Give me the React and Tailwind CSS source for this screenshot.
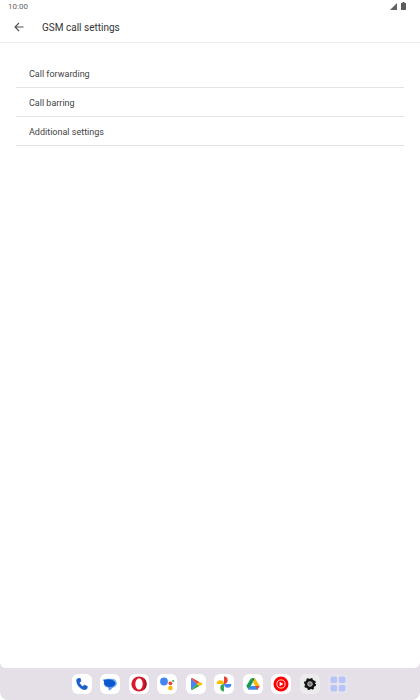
import React from "react";

const settings = ["Call forwarding", "Call barring", "Additional settings"];

const apps = [
  {
    name: "Phone",
    tile: "bg-white",
    art: (
      <path
        d="M8.200 4.500 6 4.600C5 4.800 4.600 6 4.800 7.500c.5 4 3.700 7.400 7.400 8 1.500.2 2.600-.4 2.900-1.500l.1-1.700-2.900-1.100-1.500 1.400C9 11.700 7.800 10.200 7.400 8.600L8.900 7.200Z"
        fill="#1a5dcb"
        stroke="#1a5dcb"
        strokeWidth="0.8"
        strokeLinejoin="round"
      />
    ),
  },
  {
    name: "Messages",
    tile: "bg-white",
    art: (
      <>
        <rect x="3.800" y="4.800" width="13" height="8.800" rx="4.400" fill="#7eacf8" />
        <path d="M8 13h5.500l-3.700 3.300c-.5.400-1 .1-1-.5Z" fill="#5d94ef" />
        <ellipse cx="9.800" cy="9.300" rx="5.600" ry="3.700" fill="#0b57d0" />
        <path d="M3.600 5.600h6v3.700H4.400c0-1.300-.4-2-1-2.900-.3-.5-.200-.8.2-.8Z" fill="#0b57d0" />
      </>
    ),
  },
  {
    name: "Opera",
    tile: "bg-white",
    art: (
      <>
        <circle cx="10" cy="10" r="7.600" fill="#d9182d" />
        <path d="M13 3a7.600 7.600 0 0 1 0 14c2-1.500 2.700-4 2.700-7S15 4.500 13 3Z" fill="#a80f20" />
        <ellipse cx="10" cy="10" rx="3.700" ry="5.700" fill="#fff" />
      </>
    ),
  },
  {
    name: "Assistant",
    tile: "bg-white",
    art: (
      <>
        <circle cx="7" cy="7.500" r="3.900" fill="#4285f4" />
        <circle cx="13.400" cy="9.300" r="1.900" fill="#ea4335" />
        <circle cx="16.200" cy="7" r="1" fill="#34a853" />
        <circle cx="13.400" cy="14" r="2.300" fill="#fbbc04" />
      </>
    ),
  },
  {
    name: "Play Store",
    tile: "bg-white",
    art: (
      <>
        <path d="M5 4.300v11.400L10.800 10Z" fill="#4285f4" />
        <path d="M5 4.300c.4-.5 1-.5 1.600-.1l6.900 3.800L10.700 10Z" fill="#ea4335" />
        <path d="M5 15.700c.4.500 1 .5 1.600.1l6.900-3.800L10.700 10Z" fill="#34a853" />
        <path d="m13.300 7.900 2.700 1.400c.7.400.7 1 0 1.400l-2.700 1.400L10.700 10Z" fill="#fbbc04" />
      </>
    ),
  },
  {
    name: "Photos",
    tile: "bg-white",
    art: (
      <>
        <path d="M10 10V2.600a3.700 3.700 0 0 1 0 7.400Z" fill="#ea4335" />
        <path d="M10 10h7.400a3.700 3.700 0 0 1-7.400 0Z" fill="#4285f4" />
        <path d="M10 10v7.400a3.700 3.700 0 0 1 0-7.400Z" fill="#34a853" />
        <path d="M10 10H2.600a3.700 3.700 0 0 1 7.400 0Z" fill="#fbbc04" />
      </>
    ),
  },
  {
    name: "Drive",
    tile: "bg-white",
    art: (
      <>
        <path d="m8 4.300 2 3.700-4.400 7.700L3.300 12Z" fill="#149b55" />
        <path d="M8 4.300h4L10 8Z" fill="#188038" />
        <path d="M12 4.300 16.700 12h-4.400L10 8Z" fill="#fbbc04" />
        <path d="M7.600 12h9.100l-2.300 3.700H5.600Z" fill="#4285f4" />
        <path d="M12.300 12h4.400l-2.300 3.700Z" fill="#ea4335" />
      </>
    ),
  },
  {
    name: "YouTube Music",
    tile: "bg-white",
    art: (
      <>
        <circle cx="10" cy="10" r="7.500" fill="#f00" />
        <circle cx="10" cy="10" r="4.100" fill="none" stroke="#fff" strokeWidth="0.8" />
        <path d="m8.600 7.700 3.900 2.300-3.900 2.300Z" fill="#fff" />
      </>
    ),
  },
  {
    name: "Settings",
    tile: "bg-[#ececec]",
    art: (
      <>
        <circle cx="10" cy="10" r="5.200" fill="#111" />
        <circle cx="10" cy="10" r="5.400" fill="none" stroke="#111" strokeWidth="1.400" strokeDasharray="2.120 2.120" />
        <circle cx="10" cy="10" r="2.300" fill="#777" stroke="#ddd" strokeWidth="0.800" />
      </>
    ),
  },
  {
    name: "All apps",
    tile: "bg-[#e5e3ec]",
    art: (
      <g fill="#b8c3f7">
        <rect x="2.500" y="2.500" width="6.600" height="6.600" rx="1.800" />
        <rect x="10.900" y="2.500" width="6.600" height="6.600" rx="1.800" />
        <rect x="2.500" y="10.900" width="6.600" height="6.600" rx="1.800" />
        <rect x="10.900" y="10.900" width="6.600" height="6.600" rx="1.800" />
      </g>
    ),
  },
];

function StatusBar() {
  return (
    <div className="flex h-3 items-center justify-between pl-2 pr-3.5 text-[8px] leading-3 text-[#666]">
      <span className="pt-px">10:00</span>
      <div className="flex items-center gap-1">
        <svg viewBox="0 0 7 7" className="size-[7px]" aria-hidden="true">
          <path d="M7 0v7H0Z" fill="#626262" />
        </svg>
        <svg viewBox="0 0 5 8" className="h-2 w-[5px]" aria-hidden="true">
          <path d="M1.500 0h2v.9H4.500q.5 0 .5.500v6q0 .6-.6.600H.6Q0 8 0 7.400v-6Q0 .9.500.9h1Z" fill="#5c5c5c" />
        </svg>
      </div>
    </div>
  );
}

export default function App() {
  return (
    <div className="flex min-h-screen flex-col bg-white font-[Roboto,sans-serif]">
      <div className="flex grow flex-col bg-[#e5e0e7]">
        <div className="grow rounded-b-md bg-white">
          <StatusBar />
          <header className="flex h-[31px] items-center gap-4 border-b border-[#ededed] pl-3">
            <button type="button" aria-label="Back" className="flex size-3.5 items-center justify-center">
              <svg viewBox="0 0 10 10" className="size-2.5" fill="none" stroke="#505050" strokeWidth="1.100" aria-hidden="true">
                <path d="M9.500 5H1.200M5 1 1 5l4 4" />
              </svg>
            </button>
            <h1 className="pt-px text-[10px] leading-4 text-[#333]">GSM call settings</h1>
          </header>
          <main className="px-4 pt-4">
            <ul>
              {settings.map((label) => (
                <li key={label} className="border-b border-[#e3e3e3]">
                  <button type="button" className="block w-full px-[13px] pb-1.5 pt-2 text-left text-[9px] leading-[14px] text-[#444]">
                    {label}
                  </button>
                </li>
              ))}
            </ul>
          </main>
        </div>
      </div>
      <nav aria-label="Dock" className="flex h-8 justify-center rounded-b-lg bg-[#e5e0e7] pt-1.5">
        <div className="flex w-[276px] justify-between">
          {apps.map((app) => (
            <button
              key={app.name}
              type="button"
              aria-label={app.name}
              className={"size-5 shrink-0 rounded-md " + app.tile}
            >
              <svg viewBox="0 0 20 20" className="size-5" aria-hidden="true">
                {app.art}
              </svg>
            </button>
          ))}
        </div>
      </nav>
    </div>
  );
}
